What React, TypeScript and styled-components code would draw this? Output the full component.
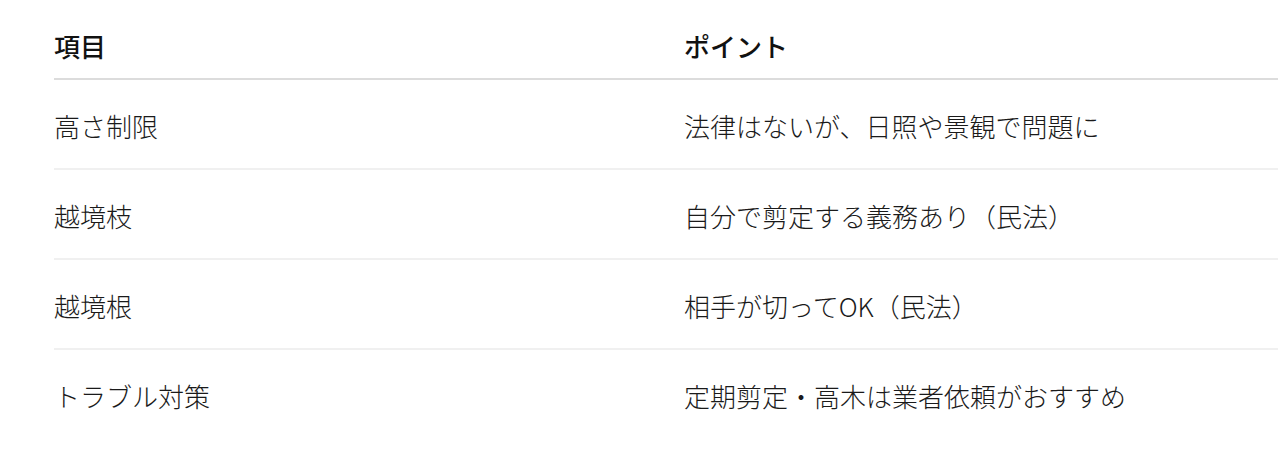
import styled, { createGlobalStyle } from 'styled-components';

const GlobalStyle = createGlobalStyle`
  body {
    margin: 0;
    background: #ffffff;
    font-family: "Noto Sans CJK JP", "Noto Sans", sans-serif;
    color: #1f1f1f;
  }
`;

const Wrapper = styled.div`
  padding-left: 54px;
  padding-bottom: 24px;
`;

const Row = styled.div<{ $header?: boolean; $last?: boolean }>`
  display: grid;
  grid-template-columns: 630px 1fr;
  padding: ${({ $header }) => ($header ? '24px 0 10px' : '24px 0 20px')};
  border-bottom: 2px solid
    ${({ $header, $last }) =>
      $header ? '#dcdcdc' : $last ? 'transparent' : '#f0f0f0'};
`;

const Cell = styled.div<{ $header?: boolean }>`
  font-size: 26px;
  line-height: 44px;
  font-weight: ${({ $header }) => ($header ? 500 : 300)};
  color: ${({ $header }) => ($header ? '#111111' : '#1a1a1a')};
  white-space: nowrap;
`;

const rows = [
  { item: '高さ制限', point: '法律はないが、日照や景観で問題に' },
  { item: '越境枝', point: '自分で剪定する義務あり（民法）' },
  { item: '越境根', point: '相手が切ってOK（民法）' },
  { item: 'トラブル対策', point: '定期剪定・高木は業者依頼がおすすめ' },
];

export default function App() {
  return (
    <>
      <GlobalStyle />
      <Wrapper>
        <Row $header>
          <Cell $header>項目</Cell>
          <Cell $header>ポイント</Cell>
        </Row>
        {rows.map((r, i) => (
          <Row key={r.item} $last={i === rows.length - 1}>
            <Cell>{r.item}</Cell>
            <Cell>{r.point}</Cell>
          </Row>
        ))}
      </Wrapper>
    </>
  );
}
